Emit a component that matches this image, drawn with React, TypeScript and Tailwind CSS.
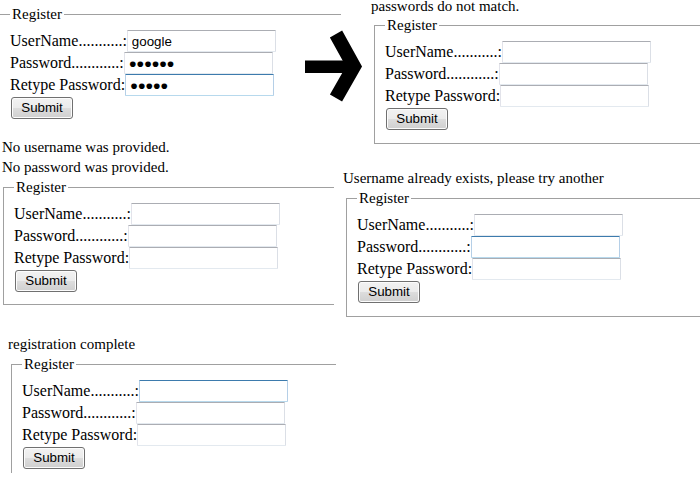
import React from 'react'

type Focus = 'user' | 'pass' | 'retype' | null

const baseInput =
  "h-[22px] w-[149px] rounded-[1px] border pl-[4px] text-[13.33px] text-black outline-none font-['Liberation_Sans',Arial,sans-serif]"
const idleBorder = 'border-[#e3e9ef] border-t-[#abadb3] border-l-[#e2e3ea] border-r-[#dbdfe6]'
const focusBorder = 'border-[#b7d9ed] border-t-[#3d7bad] border-l-[#b5cfe7] border-r-[#b5cfe7]'

function Field({ label, value, focused, secret }: { label: string; value?: string; focused?: boolean; secret?: boolean }) {
  return (
    <div className="flex h-[22px] items-center">
      <span className="whitespace-pre leading-[22px]">{label}</span>
      <input
        type="text"
        readOnly
        value={value ?? ''}
        className={`${baseInput} ${focused ? focusBorder : idleBorder} ${
          secret ? "text-[12.5px] font-['DejaVu_Sans',sans-serif] tracking-[-0.5px]" : ''
        }`}
      />
    </div>
  )
}

function RegisterForm({
  focus = null,
  values = ['', '', ''],
  className = '',
}: {
  focus?: Focus
  values?: [string, string, string]
  className?: string
}) {
  return (
    <fieldset className={`border border-[#a0a0a0] px-[10px] pt-[7px] ${className}`}>
      <legend className="px-[2px] text-[15px] leading-[18px]">Register</legend>
      <Field label="UserName...........:" value={values[0]} focused={focus === 'user'} />
      <Field label="Password............:" value={values[1]} focused={focus === 'pass'} secret />
      <Field label="Retype Password:" value={values[2]} focused={focus === 'retype'} secret />
      <button
        type="button"
        className="ml-[1px] mt-[1px] box-border block h-[22px] w-[62px] rounded-[3px] border border-[#707070] bg-[linear-gradient(#f2f2f2_0%,#ebebeb_50%,#dddddd_51%,#cfcfcf_100%)] text-[13.33px] leading-[20px] text-black shadow-[inset_0_0_0_1px_#fcfcfc] font-['Liberation_Sans',Arial,sans-serif]"
      >
        Submit
      </button>
    </fieldset>
  )
}

function Arrow() {
  // thick black arrow between the first two shots
  return (
    <svg className="absolute left-[300px] top-[28px]" width="70" height="76" viewBox="300 28 70 76">
      <rect x="305" y="60.5" width="50" height="12.5" fill="#000" />
      <polyline
        points="336,34 354,66.5 336,98"
        fill="none"
        stroke="#000"
        strokeWidth="14"
        strokeLinejoin="miter"
        strokeMiterlimit="4"
      />
    </svg>
  )
}

export default function App() {
  return (
    <div className="relative h-[485px] w-[700px] overflow-hidden bg-white text-[16px] text-black font-['Liberation_Serif','Times_New_Roman',serif]">
      {/* filled in form */}
      <div className="absolute left-0 top-0 h-[126px] w-[341px] overflow-hidden">
        <RegisterForm
          className="ml-[-1px] mt-[5px] w-[420px] pb-[13px]"
          focus="retype"
          values={['google', '●●●●●●', '●●●●●']}
        />
      </div>

      <Arrow />

      {/* mismatch */}
      <div className="absolute left-[371px] top-[-4px] w-[340px]">
        <p className="text-[15px] leading-[20px]">passwords do not match.</p>
        <RegisterForm className="ml-[3px] w-[340px] pb-[13px]" />
      </div>

      {/* empty submit */}
      <div className="absolute left-0 top-[137px] w-[334px] overflow-hidden">
        <div className="pl-[2px] text-[15px]">
          <p className="leading-[20px]">No username was provided.</p>
          <p className="leading-[20px]">No password was provided.</p>
        </div>
        <RegisterForm className="ml-[3px] mt-[1px] w-[400px] pb-[12px]" />
      </div>

      {/* taken name */}
      <div className="absolute left-[343px] top-[168px] w-[360px]">
        <p className="text-[15px] leading-[20px]">Username already exists, please try another</p>
        <RegisterForm className="ml-[3px] mt-[1px] w-[400px] pb-[13px]" focus="pass" />
      </div>

      {/* done */}
      <div className="absolute left-[8px] top-[334px] h-[139px] w-[328px] overflow-hidden">
        <p className="text-[15px] leading-[20px]">registration complete</p>
        <RegisterForm className="ml-[3px] mt-[1px] w-[400px] pb-[13px]" focus="user" />
      </div>
    </div>
  )
}
